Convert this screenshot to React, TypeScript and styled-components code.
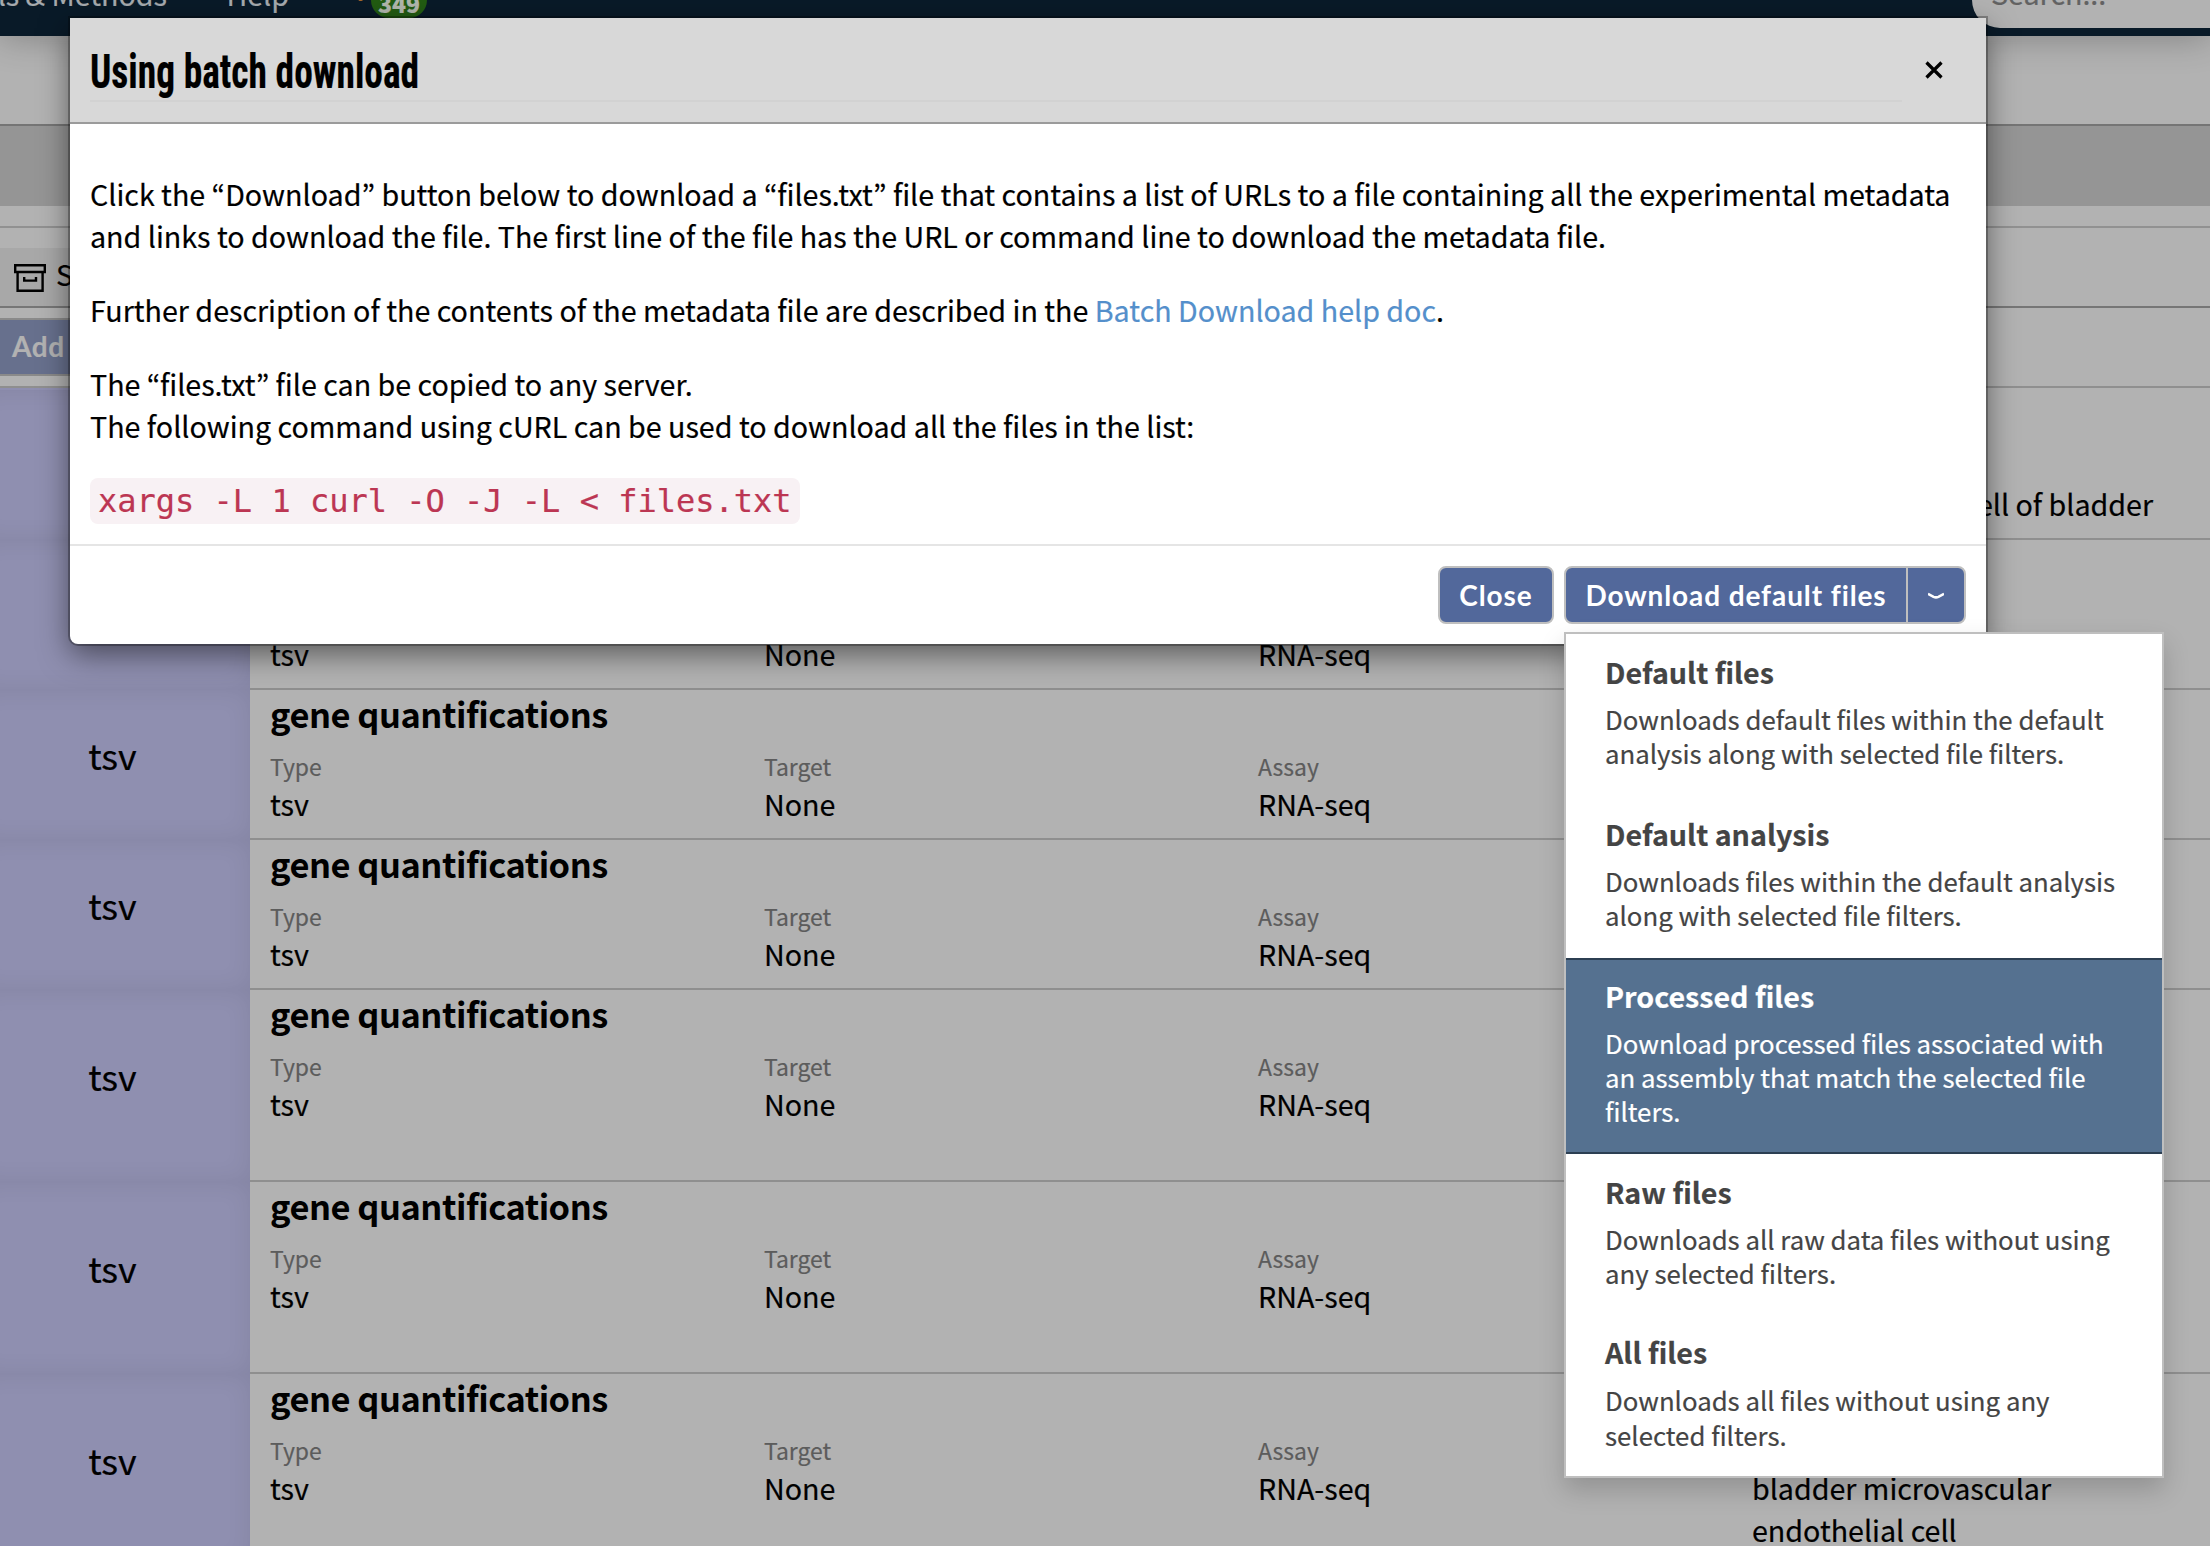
import React from 'react';
import styled, { createGlobalStyle, css } from 'styled-components';

const sans = css`
  font-family: 'Noto Sans CJK KR', 'Noto Sans', sans-serif;
`;

const GlobalStyle = createGlobalStyle`
  *, *::before, *::after { box-sizing: border-box; }
  html, body { margin: 0; padding: 0; }
  body { overflow: hidden; background: #b2b2b2; color: #000; }
  h2, h3, h4, p, ul { margin: 0; padding: 0; font-size: inherit; font-weight: inherit; }
`;

const Page = styled.div`
  ${sans}
  position: relative;
  width: 2210px;
  height: 1546px;
  overflow: hidden;
  background: #b2b2b2;
  font-size: 28.65px;
  line-height: 42px;
  -webkit-text-stroke: 0.2px currentColor;
`;

/* Navigation bar */

const NavBar = styled.nav`
  position: relative;
  display: flex;
  align-items: flex-end;
  height: 36px;
  background: #091a28;
  color: #a6aaae;
  box-shadow: 0 0 36px rgba(0, 0, 0, 0.3);
`;

const NavItem = styled.span<{ $width?: number }>`
  display: flex;
  flex: none;
  justify-content: flex-end;
  width: ${p => (p.$width ? `${p.$width}px` : 'auto')};
  height: 42px;
  margin-bottom: 21px;
  white-space: nowrap;
`;

const CartLink = styled.span`
  display: flex;
  flex: none;
  align-items: flex-end;
  height: 36px;
  margin-left: 65px;
`;

const CartIcon = styled.svg`
  width: 12px;
  height: 4px;
  margin-bottom: 33px;
`;

const Badge = styled.span`
  display: flex;
  align-items: flex-end;
  justify-content: center;
  width: 56px;
  height: 36px;
  margin: 0 0 18px 5px;
  border-radius: 18px;
  background: #225c12;
  color: #b2b8ae;
  font-size: 23px;
  font-weight: 900;
  line-height: 30px;
`;

const SearchBox = styled.div`
  width: 300px;
  height: 60px;
  margin: 0 -62px 8px auto;
  padding: 4px 0 0 19px;
  border-radius: 28px;
  background: #b2b2b2;
  color: #626262;
`;

/* Page sections above the table */

const Spacer = styled.div<{ $height: number; $line?: string; $fill?: string }>`
  height: ${p => p.$height}px;
  background: ${p => p.$fill ?? 'transparent'};
  border-bottom: ${p => (p.$line ? `2px solid ${p.$line}` : 'none')};
`;

const TabBar = styled.div`
  display: flex;
  align-items: flex-end;
  height: 80px;
  border-bottom: 2px solid #767676;
`;

const Tab = styled.div`
  display: flex;
  align-items: center;
  gap: 10px;
  width: 240px;
  height: 58px;
  padding: 2px 0 0 14px;
  background: #a8a8a8;
`;

const TabLabel = styled.span`
  padding-bottom: 9px;
`;

const Toolbar = styled.div`
  height: 80px;
  padding-top: 10px;
  border-bottom: 2px solid #8f8f8f;
`;

const AddButton = styled.div`
  width: 300px;
  height: 58px;
  padding-left: 12px;
  border: solid #8a8a8a;
  border-width: 2px 0;
  background: #67708d;
  color: #b2b2b2;
  font: 700 28px/52px Lato, sans-serif;
  letter-spacing: 0.6px;
`;

/* File rows */

const Row = styled.div<{ $first?: boolean }>`
  display: flex;
  padding-top: ${p => (p.$first ? 2 : 0)}px;
  background: ${p => (p.$first ? 'linear-gradient(90deg, #8f8fb0 250px, transparent 250px)' : 'none')};
`;

const RowType = styled.div`
  display: flex;
  flex: none;
  align-items: center;
  justify-content: center;
  width: 274px;
  margin-left: -24px;
  padding: 0 1px 22px 0;
  background: #8f8fb0;
  box-shadow: inset 0 0 24px rgba(0, 0, 0, 0.08);
  font-size: 35.8px;
`;

const RowBody = styled.div`
  flex: 1;
  padding: 2px 0 13px 20px;
  border-bottom: 2px solid #8f8f8f;
`;

const RowTitle = styled.h4`
  margin-bottom: 16px;
  font-size: 34.4px;
  font-weight: 700;
  letter-spacing: -0.47px;
  -webkit-text-stroke: 0;
`;

const Fields = styled.div`
  display: grid;
  grid-template-columns: repeat(3, 494px) 410px;
`;

const FieldLabel = styled.div`
  margin-bottom: 1px;
  color: #5c5c5c;
  font-size: 22.95px;
  line-height: 32px;
`;

/* Modal */

const Modal = styled.section`
  position: absolute;
  top: 18px;
  left: 70px;
  width: 1916px;
  height: 626px;
  border-radius: 0 0 8px 8px;
  background: #fff;
  box-shadow: 0 0 0 2px rgba(0, 0, 0, 0.28), 0 10px 30px rgba(0, 0, 0, 0.5);
`;

const ModalHeader = styled.header`
  display: flex;
  height: 106px;
  padding-left: 20px;
  background: #d8d8d8;
  border-bottom: 2px solid #9b9b9b;
`;

const ModalTitle = styled.h2`
  flex: none;
  width: 1812px;
  height: 84px;
  padding-top: 21px;
  border-bottom: 2px solid #d2d2d2;
`;

const TitleText = styled.span`
  display: block;
  width: 480px;
  transform: scaleX(0.788);
  transform-origin: 0 50%;
  font: 700 47.5px/66px 'Roboto Condensed', Roboto, sans-serif;
  white-space: nowrap;
`;

const CloseIcon = styled.svg`
  width: 18px;
  height: 18px;
  margin: 43px 0 0 23px;
`;

const ModalBody = styled.div`
  height: 420px;
  padding: 49px 20px 0;
`;

const Paragraph = styled.p`
  margin-bottom: 32px;
  white-space: nowrap;
`;

const HelpLink = styled.span`
  color: #548fcb;
`;

const Command = styled.code`
  display: block;
  width: 710px;
  height: 46px;
  margin-top: -1px;
  padding-left: 8px;
  border-radius: 8px;
  background: #f8f1f4;
  color: #bc3653;
  font: 32px/46px 'DejaVu Sans Mono', monospace;
  white-space: pre;
`;

const ModalFooter = styled.footer`
  display: flex;
  gap: 10px;
  justify-content: flex-end;
  height: 100px;
  padding: 20px 20px 0;
  border-top: 2px solid #e5e5e5;
`;

const ButtonBox = styled.div<{ $width: number }>`
  display: flex;
  width: ${p => p.$width}px;
  height: 58px;
  border: 2px solid #bfbfbf;
  border-radius: 8px;
  background: #52689b;
  color: #fff;
  font: 700 28px/52px Lato, sans-serif;
  letter-spacing: 0.9px;
  -webkit-text-stroke: 0;
`;

const ButtonLabel = styled.span`
  flex: 1;
  padding-top: 1px;
  text-align: center;
  white-space: nowrap;
`;

const DropdownToggle = styled.span`
  display: flex;
  align-items: center;
  justify-content: center;
  width: 58px;
  border-left: 2px solid #bfbfbf;
`;

/* Download menu */

const Menu = styled.ul`
  position: absolute;
  top: 632px;
  left: 1564px;
  width: 600px;
  height: 846px;
  border: 2px solid #bfbfbf;
  background: #fff;
  box-shadow: 0 12px 24px rgba(0, 0, 0, 0.175);
  list-style: none;
`;

const MenuItem = styled.li<{ $active: boolean; $height: number }>`
  height: ${p => p.$height}px;
  padding: 16px 37px 0 39px;
  border: solid ${p => (p.$active ? '#2c3f52' : 'transparent')};
  border-width: 2px 0;
  background: ${p => (p.$active ? '#557190' : 'transparent')};
  background-clip: padding-box;
  color: ${p => (p.$active ? '#fff' : '#444')};
`;

const MenuTitle = styled.h3`
  margin-bottom: 10px;
  font-weight: 700;
  line-height: 40px;
`;

const MenuText = styled.p<{ $leading: number }>`
  font-size: 25.78px;
  line-height: ${p => p.$leading}px;
`;

const fileRows = [
  'smooth muscle cell of bladder',
  'bladder',
  'bladder',
  'bladder',
  'bladder microvascular endothelial cell',
  'bladder microvascular endothelial cell',
  'bladder microvascular endothelial cell',
];

const menuItems = [
  { title: 'Default files', text: 'Downloads default files within the default analysis along with selected file filters.', height: 162 },
  { title: 'Default analysis', text: 'Downloads files within the default analysis along with selected file filters.', height: 162 },
  { title: 'Processed files', text: 'Download processed files associated with an assembly that match the selected file filters.', height: 196, active: true },
  { title: 'Raw files', text: 'Downloads all raw data files without using any selected filters.', height: 160 },
  { title: 'All files', text: 'Downloads all files without using any selected filters.', height: 162, leading: 35 },
];

function ArchiveIcon() {
  return (
    <svg width="32" height="28" viewBox="0 0 32 28" fill="none" stroke="#000" strokeWidth="2.4">
      <path d="M1.2 1.2H30.8V8H1.2Z" />
      <path d="M3.6 8V26.8H28.6V8" />
      <path d="M10.2 13V16.6H22V13" />
    </svg>
  );
}

function FileRow({ biosample, first }: { biosample: string; first: boolean }) {
  const fields = [['Type', 'tsv'], ['Target', 'None'], ['Assay', 'RNA-seq'], ['Biosample', biosample]];
  return (
    <Row $first={first}>
      <RowType>tsv</RowType>
      <RowBody>
        <RowTitle>gene quantifications</RowTitle>
        <Fields>
          {fields.map(([label, value]) => (
            <div key={label}>
              <FieldLabel>{label}</FieldLabel>
              <div>{value}</div>
            </div>
          ))}
        </Fields>
      </RowBody>
    </Row>
  );
}

export default function App() {
  return (
    <Page>
      <GlobalStyle />
      <NavBar>
        <NavItem $width={167}>Materials &amp; Methods</NavItem>
        <NavItem $width={122}>Help</NavItem>
        <CartLink>
          <CartIcon viewBox="0 0 12 4">
            <path d="M3 0H11L7.5 2H5.5Z" fill="#a8682c" />
          </CartIcon>
          <Badge>349</Badge>
        </CartLink>
        <SearchBox>Search...</SearchBox>
      </NavBar>
      <Spacer $height={90} $line="#757575" />
      <Spacer $height={80} $fill="#959595" />
      <Spacer $height={22} $line="#919191" />
      <TabBar>
        <Tab>
          <ArchiveIcon />
          <TabLabel>S</TabLabel>
        </Tab>
      </TabBar>
      <Toolbar>
        <AddButton>Add</AddButton>
      </Toolbar>
      {fileRows.map((biosample, i) => (
        <FileRow key={i} biosample={biosample} first={i === 0} />
      ))}

      <Modal>
        <ModalHeader>
          <ModalTitle>
            <TitleText>Using batch download</TitleText>
          </ModalTitle>
          <CloseIcon viewBox="0 0 18 18">
            <path d="M1.5 1.5L16.5 16.5M16.5 1.5L1.5 16.5" stroke="#000" strokeWidth="3.2" />
          </CloseIcon>
        </ModalHeader>
        <ModalBody>
          <Paragraph>
            Click the “Download” button below to download a “files.txt” file that contains a list of URLs to a file containing all the experimental metadata
            <br />
            and links to download the file. The first line of the file has the URL or command line to download the metadata file.
          </Paragraph>
          <Paragraph>
            Further description of the contents of the metadata file are described in the <HelpLink>Batch Download help doc</HelpLink>.
          </Paragraph>
          <Paragraph>
            The “files.txt” file can be copied to any server.
            <br />
            The following command using cURL can be used to download all the files in the list:
          </Paragraph>
          <Command>{'xargs -L 1 curl -O -J -L < files.txt'}</Command>
        </ModalBody>
        <ModalFooter>
          <ButtonBox $width={116}>
            <ButtonLabel>Close</ButtonLabel>
          </ButtonBox>
          <ButtonBox $width={402}>
            <ButtonLabel>Download default files</ButtonLabel>
            <DropdownToggle>
              <svg width="16" height="7" viewBox="0 0 16 7" fill="none" stroke="#fff" strokeWidth="2.6">
                <path d="M0 1.8L5.6 4.8Q8 6 10.4 4.8L16 1.8" />
              </svg>
            </DropdownToggle>
          </ButtonBox>
        </ModalFooter>
      </Modal>

      <Menu>
        {menuItems.map(item => (
          <MenuItem key={item.title} $active={!!item.active} $height={item.height}>
            <MenuTitle>{item.title}</MenuTitle>
            <MenuText $leading={item.leading ?? 34}>{item.text}</MenuText>
          </MenuItem>
        ))}
      </Menu>
    </Page>
  );
}
